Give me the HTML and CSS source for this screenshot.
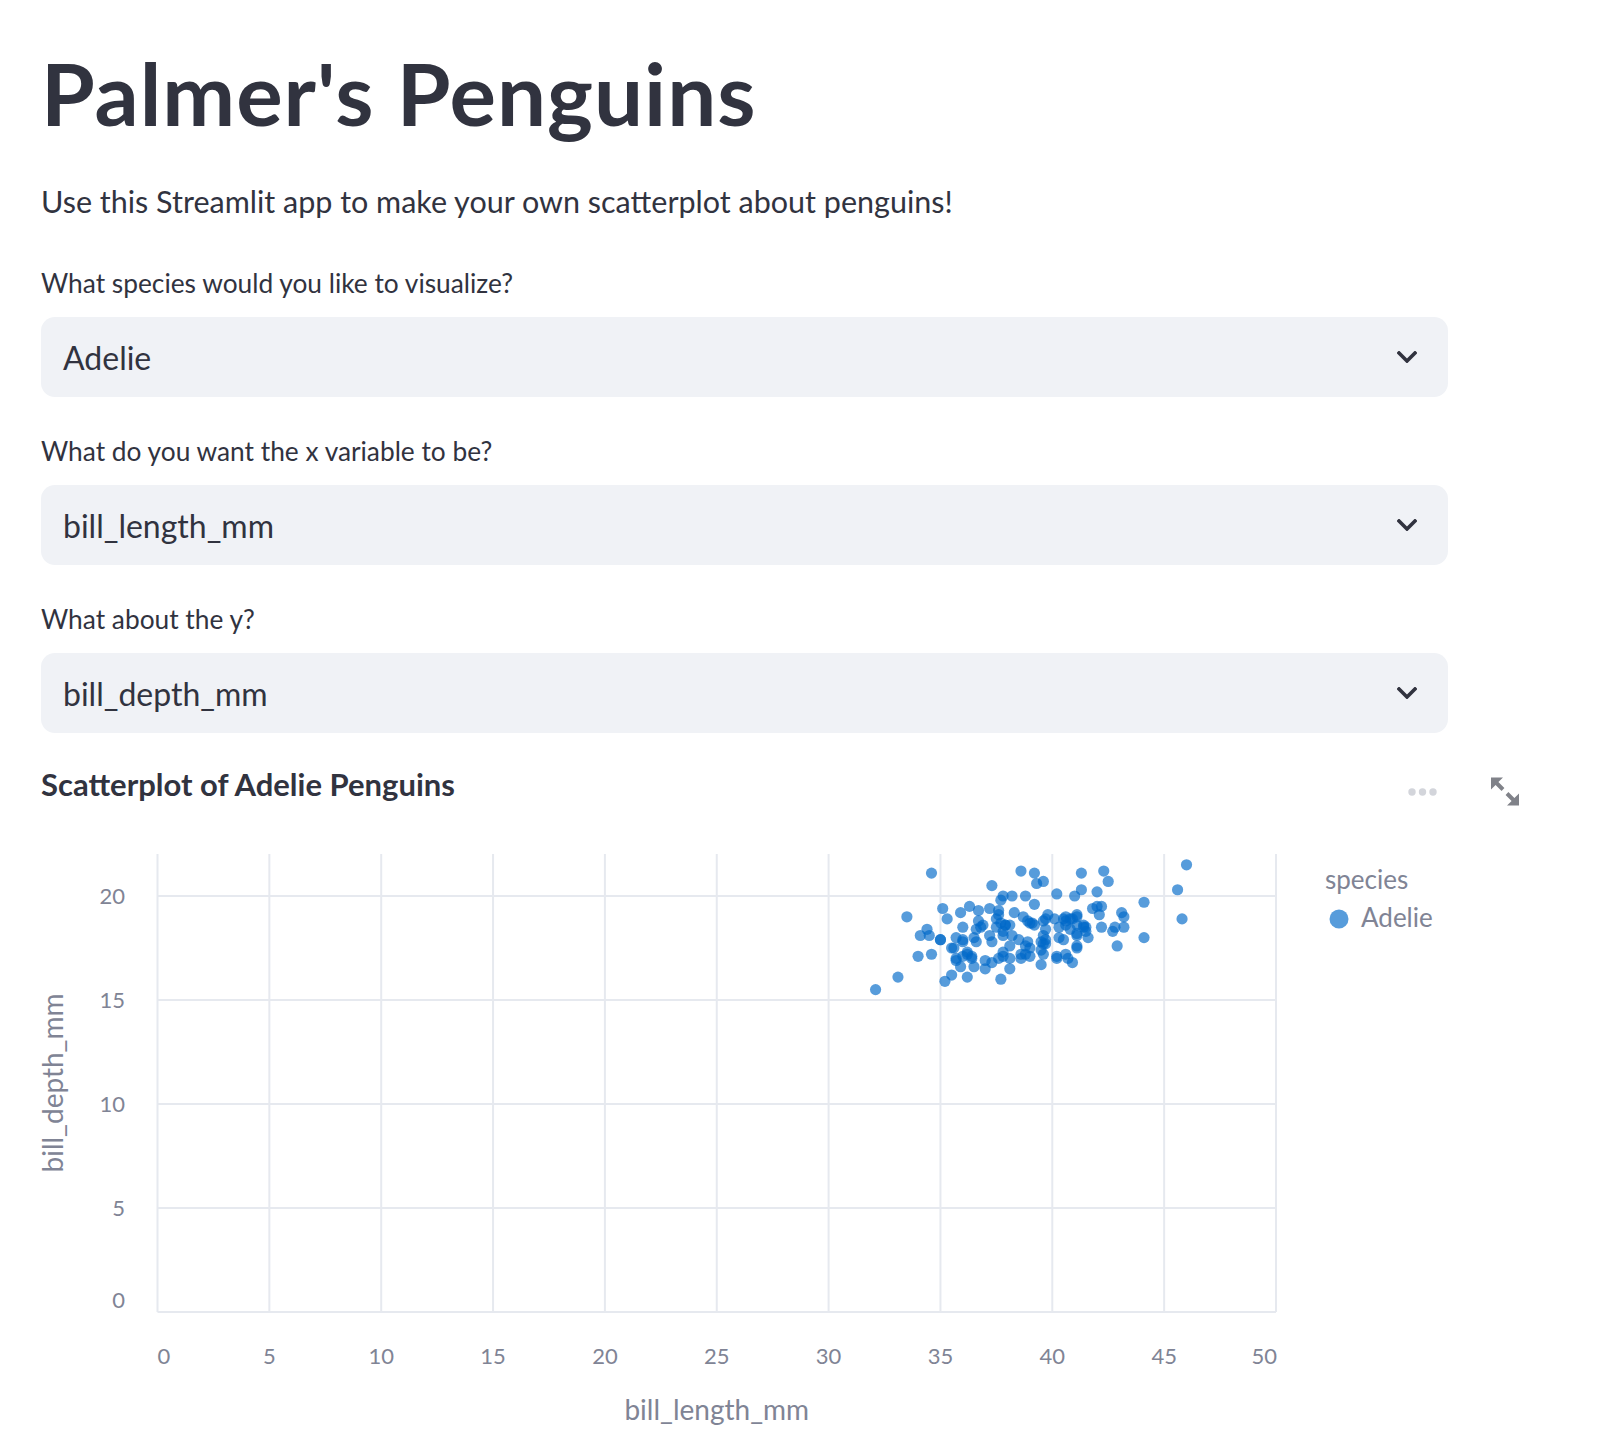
FILE: index.html
```html
<!DOCTYPE html>
<html lang="en">
<head>
<meta charset="utf-8">
<title>Palmer's Penguins</title>
<link rel="stylesheet" href="styles.css">
</head>
<body>
<main class="app">
  <h1 class="title">Palmer's Penguins</h1>
  <p class="intro">Use this Streamlit app to make your own scatterplot about penguins!</p>

  <div class="fields">
    <div class="field">
      <label class="field-label">What species would you like to visualize?</label>
      <div class="select">
        <span class="select-value">Adelie</span>
        <svg class="chevron" viewBox="0 0 20 12" width="20" height="12"><path d="M2 2 L10 10 L18 2"/></svg>
      </div>
    </div>
    <div class="field">
      <label class="field-label">What do you want the x variable to be?</label>
      <div class="select">
        <span class="select-value">bill_length_mm</span>
        <svg class="chevron" viewBox="0 0 20 12" width="20" height="12"><path d="M2 2 L10 10 L18 2"/></svg>
      </div>
    </div>
    <div class="field">
      <label class="field-label">What about the y?</label>
      <div class="select">
        <span class="select-value">bill_depth_mm</span>
        <svg class="chevron" viewBox="0 0 20 12" width="20" height="12"><path d="M2 2 L10 10 L18 2"/></svg>
      </div>
    </div>
  </div>

  <section class="chart">
    <div class="chart-toolbar">
      <svg class="menu-dots" viewBox="0 0 32 10" width="32" height="10">
        <circle cx="5" cy="5" r="3.7"/><circle cx="15.5" cy="5" r="3.7"/><circle cx="26" cy="5" r="3.7"/>
      </svg>
      <svg class="expand" viewBox="0 0 28 28" width="28" height="29">
        <path d="M0 0 H12 L7.41 4.59 L13.41 10.59 L10.59 13.41 L4.59 7.41 L0 12 Z"/>
        <path d="M28 28 H16 L20.59 23.41 L14.59 17.41 L17.41 14.59 L23.41 20.59 L28 16 Z"/>
      </svg>
    </div>
    <h3 class="chart-title">Scatterplot of Adelie Penguins</h3>
    <svg class="plot" viewBox="41 805 1500 630" width="1500" height="630">
      <g class="grid">
        <line x1="157.5" y1="854" x2="157.5" y2="1312"/>
        <line x1="269.35" y1="854" x2="269.35" y2="1312"/>
        <line x1="381.2" y1="854" x2="381.2" y2="1312"/>
        <line x1="493.05" y1="854" x2="493.05" y2="1312"/>
        <line x1="604.9" y1="854" x2="604.9" y2="1312"/>
        <line x1="716.75" y1="854" x2="716.75" y2="1312"/>
        <line x1="828.6" y1="854" x2="828.6" y2="1312"/>
        <line x1="940.45" y1="854" x2="940.45" y2="1312"/>
        <line x1="1052.3" y1="854" x2="1052.3" y2="1312"/>
        <line x1="1164.15" y1="854" x2="1164.15" y2="1312"/>
        <line x1="1276" y1="854" x2="1276" y2="1312"/>
        <line x1="157.5" y1="896" x2="1276" y2="896"/>
        <line x1="157.5" y1="1000" x2="1276" y2="1000"/>
        <line x1="157.5" y1="1104" x2="1276" y2="1104"/>
        <line x1="157.5" y1="1208" x2="1276" y2="1208"/>
        <line x1="157.5" y1="1312" x2="1276" y2="1312"/>
      </g>
      <g class="tick-labels y-ticks">
        <text x="125" y="904">20</text>
        <text x="125" y="1008">15</text>
        <text x="125" y="1112">10</text>
        <text x="125" y="1216">5</text>
        <text x="125" y="1308">0</text>
      </g>
      <g class="tick-labels x-ticks">
        <text x="157.5" y="1364" class="start">0</text>
        <text x="269.35" y="1364">5</text>
        <text x="381.2" y="1364">10</text>
        <text x="493.05" y="1364">15</text>
        <text x="604.9" y="1364">20</text>
        <text x="716.75" y="1364">25</text>
        <text x="828.6" y="1364">30</text>
        <text x="940.45" y="1364">35</text>
        <text x="1052.3" y="1364">40</text>
        <text x="1164.15" y="1364">45</text>
        <text x="1277" y="1364" class="end">50</text>
      </g>
      <text class="axis-title" x="716.75" y="1420">bill_length_mm</text>
      <text class="axis-title" transform="translate(63 1083) rotate(-90)">bill_depth_mm</text>
      <g id="points" class="points"></g>
      <g class="legend">
        <text x="1325" y="889">species</text>
        <circle cx="1339" cy="919" r="9.5"/>
        <text x="1361" y="927">Adelie</text>
      </g>
    </svg>
  </section>
</main>
<script src="script.js"></script>
</body>
</html>
```

FILE: styles.css
```css
html, body {
  margin: 0;
  padding: 0;
  background: #ffffff;
}

body {
  font-family: Lato, "Noto Sans", sans-serif;
  color: #31333f;
  overflow: hidden;
}

.app {
  padding: 43px 0 0 41px;
  width: 1407px;
}

.title {
  margin: 0;
  font-size: 87px;
  font-weight: 700;
  line-height: 100px;
  letter-spacing: 1px;
  color: #31333f;
}

.intro {
  margin: 36px 0 0;
  font-size: 30.5px;
  line-height: 45px;
}

.fields {
  margin-top: 40px;
  display: flex;
  flex-direction: column;
  gap: 35px;
}

.field {
  display: flex;
  flex-direction: column;
}

.field-label {
  font-size: 26.3px;
  line-height: 39px;
  margin-bottom: 14px;
}

.select {
  height: 80px;
  box-sizing: border-box;
  background: #f0f2f6;
  border-radius: 14px;
  display: flex;
  align-items: center;
  justify-content: space-between;
  padding: 0 31px 0 22px;
}

.select-value {
  font-size: 32px;
}

.chevron path {
  fill: none;
  stroke: #31333f;
  stroke-width: 3.6;
  stroke-linecap: square;
  stroke-linejoin: miter;
}

.chart {
  position: relative;
  margin-top: 30px;
}

.chart-title {
  margin: 0;
  font-size: 31px;
  font-weight: 700;
  line-height: 42px;
}

.chart-toolbar {
  position: absolute;
  top: 14px;
  left: 1366px;
  display: flex;
  align-items: center;
  gap: 52px;
}

.menu-dots circle {
  fill: #d3d5db;
}

.expand path {
  fill: #808289;
}

.plot {
  display: block;
  overflow: visible;
}

.grid line {
  stroke: #e6e9ef;
  stroke-width: 2;
}

.plot text {
  font-family: Lato, "Noto Sans", sans-serif;
  fill: #808495;
}

.tick-labels text {
  font-size: 22px;
}

.y-ticks text {
  text-anchor: end;
}

.x-ticks text {
  text-anchor: middle;
}

.x-ticks text.start {
  text-anchor: start;
}

.x-ticks text.end {
  text-anchor: end;
}

.axis-title {
  font-size: 28px;
  text-anchor: middle;
}

.points circle,
.legend circle {
  fill: #0068c9;
  fill-opacity: 0.66;
}

.legend text {
  font-size: 26px;
}
```

FILE: script.js
```js
(function () {
  var data = [
    [39.1,18.7],[39.5,17.4],[40.3,18.0],[36.7,19.3],[39.3,20.6],[38.9,17.8],[39.2,19.6],[34.1,18.1],
    [42.0,20.2],[37.8,17.1],[37.8,17.3],[41.1,17.6],[38.6,21.2],[34.6,21.1],[36.6,17.8],[38.7,19.0],
    [42.5,20.7],[34.4,18.4],[46.0,21.5],[37.8,18.3],[37.7,18.7],[35.9,19.2],[38.2,18.1],[38.8,17.2],
    [35.3,18.9],[40.6,18.6],[40.5,17.9],[37.9,18.6],[40.5,18.9],[39.5,16.7],[37.2,18.1],[39.5,17.8],
    [40.9,18.9],[36.4,17.0],[39.2,21.1],[38.8,20.0],[42.2,18.5],[37.6,19.3],[39.8,19.1],[36.5,18.0],
    [40.8,18.4],[36.0,18.5],[44.1,19.7],[37.0,16.9],[39.6,18.8],[41.1,19.0],[37.5,18.9],[36.0,17.9],
    [42.3,21.2],[39.6,17.7],[40.1,18.9],[35.0,17.9],[42.0,19.5],[34.5,18.1],[41.4,18.6],[39.0,17.5],
    [40.6,18.8],[36.5,16.6],[37.6,19.1],[35.7,16.9],[41.3,21.1],[37.6,17.0],[41.1,18.2],[36.4,17.1],
    [41.6,18.0],[35.5,16.2],[41.1,19.1],[35.9,16.6],[41.8,19.4],[33.5,19.0],[39.7,18.4],[39.6,17.2],
    [45.8,18.9],[35.5,17.5],[42.8,18.5],[40.9,16.8],[37.2,19.4],[36.2,16.1],[42.1,19.1],[34.6,17.2],
    [42.9,17.6],[36.7,18.8],[35.1,19.4],[37.3,17.8],[41.3,20.3],[36.3,19.5],[36.9,18.6],[38.3,19.2],
    [38.9,18.8],[35.7,18.0],[41.1,18.1],[34.0,17.1],[39.6,18.1],[36.2,17.3],[40.8,18.9],[38.1,18.6],
    [40.3,18.5],[33.1,16.1],[43.2,18.5],[35.0,17.9],[41.0,20.0],[37.7,16.0],[37.8,20.0],[37.9,18.6],
    [39.7,18.9],[38.6,17.2],[38.2,20.0],[38.1,17.0],[43.2,19.0],[38.1,16.5],[45.6,20.3],[39.7,17.7],
    [42.2,19.5],[39.6,20.7],[42.7,18.3],[38.6,17.0],[37.3,20.5],[35.7,17.0],[41.1,18.6],[36.2,17.2],
    [37.7,19.8],[40.2,17.0],[41.4,18.5],[35.2,15.9],[40.6,19.0],[38.8,17.6],[41.5,18.3],[39.0,17.1],
    [44.1,18.0],[38.5,17.9],[43.1,19.2],[36.8,18.5],[37.5,18.5],[38.1,17.6],[41.1,17.5],[35.6,17.5],
    [40.2,20.1],[37.0,16.5],[39.7,17.9],[40.2,17.1],[40.6,17.2],[32.1,15.5],[40.7,17.0],[37.3,16.8],
    [39.0,18.7],[39.2,18.6],[36.6,18.4],[36.0,17.8],[37.8,18.1],[36.0,17.1],[41.5,18.5]
  ];
  var NS = 'http://www.w3.org/2000/svg';
  var g = document.getElementById('points');
  data.forEach(function (d) {
    var c = document.createElementNS(NS, 'circle');
    c.setAttribute('cx', (157.5 + d[0] * 22.37).toFixed(2));
    c.setAttribute('cy', (1312 - d[1] * 20.8).toFixed(2));
    c.setAttribute('r', '5.6');
    g.appendChild(c);
  });
})();
```
